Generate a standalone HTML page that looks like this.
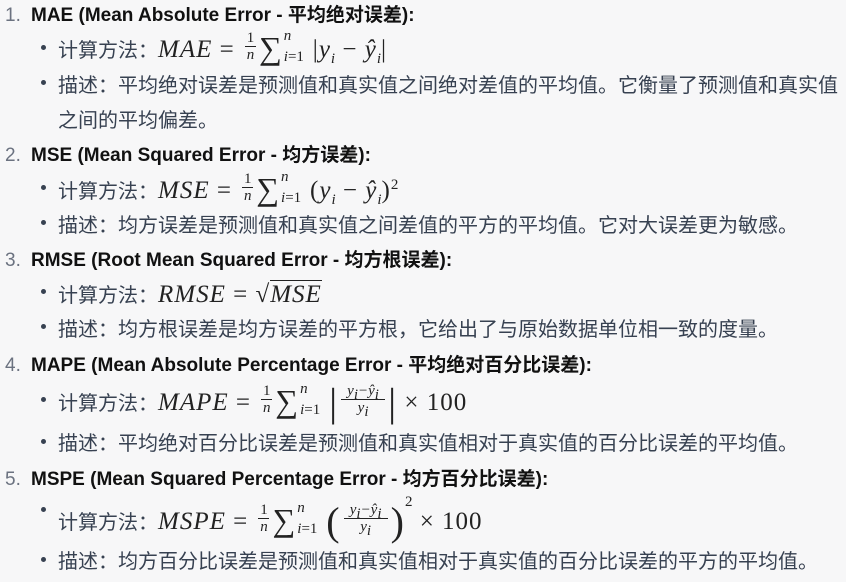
<!DOCTYPE html>
<html><head><meta charset="utf-8"><style>
body{margin:0;background:#f7f7f8;width:846px;height:582px;overflow:hidden;position:relative;font-family:"Liberation Sans","Noto Sans CJK SC",sans-serif;color:#374151;font-size:20px}
.l{position:absolute;white-space:nowrap;line-height:24px}
.h{font-weight:bold;color:#111;font-size:19px;left:31px}
.num{left:5px;color:#6b7280;font-size:19px}
.b{left:58px}
.dot{position:absolute;left:41px;width:5px;height:5px;border-radius:50%;background:#374151}
.m{font-family:"Liberation Serif",serif;font-size:25px;color:#222;letter-spacing:1px}
.i{font-style:italic}
.f{display:inline-block;position:relative;height:10px;margin:0 3px;letter-spacing:0}
.f>span{position:absolute;left:0;right:0;text-align:center;font-size:15px;line-height:14px;white-space:nowrap}
.f>.t{top:-16px;border-bottom:1px solid #222;padding-bottom:1px}
.f>.d{top:1px}
.s{font-size:15px;line-height:0;position:relative;letter-spacing:0}
.sg{font-size:32px;line-height:0;vertical-align:-2px}
.sum{display:inline-block;position:relative;width:30px}
.sum>span{position:absolute;left:1px;font-size:15px;line-height:14px;font-style:italic;letter-spacing:0;white-space:nowrap}
.sum>.up{top:-28px}
.sum>.dn{top:-7px}
.big{font-size:40px;font-weight:normal;vertical-align:-6px;line-height:0}
</style></head><body>
<div class="l num" style="top:4px">1.</div><div class="l h" style="top:4px">MAE (Mean Absolute Error - 平均绝对误差):</div>
<div class="dot" style="top:45px"></div><div class="l b" style="top:38px">计算方法：<span class="m"><span class="i">MAE</span> = <span class="f" style="width:11px"><span class="t">1</span><span class="d i">n</span></span><span class="sg">∑</span><span class="sum"><span class="up">n</span><span class="dn">i<span style="font-style:normal">=1</span></span></span>|<span class="i">y<sub class="s">i</sub></span> − <span class="i">ŷ<sub class="s">i</sub></span>|</span></div>
<div class="dot" style="top:80px"></div><div class="l b" style="top:74px">描述：平均绝对误差是预测值和真实值之间绝对差值的平均值。它衡量了预测值和真实值</div>
<div class="l b" style="top:109px">之间的平均偏差。</div>

<div class="l num" style="top:144px">2.</div><div class="l h" style="top:144px">MSE (Mean Squared Error - 均方误差):</div>
<div class="dot" style="top:185px"></div><div class="l b" style="top:179px">计算方法：<span class="m"><span class="i">MSE</span> = <span class="f" style="width:11px"><span class="t">1</span><span class="d i">n</span></span><span class="sg">∑</span><span class="sum"><span class="up">n</span><span class="dn">i<span style="font-style:normal">=1</span></span></span>(<span class="i">y<sub class="s">i</sub></span> − <span class="i">ŷ<sub class="s">i</sub></span>)<sup class="s">2</sup></span></div>
<div class="dot" style="top:220px"></div><div class="l b" style="top:214px">描述：均方误差是预测值和真实值之间差值的平方的平均值。它对大误差更为敏感。</div>

<div class="l num" style="top:249px">3.</div><div class="l h" style="top:249px">RMSE (Root Mean Squared Error - 均方根误差):</div>
<div class="dot" style="top:289px"></div><div class="l b" style="top:283px">计算方法：<span class="m"><span class="i">RMSE</span> = √<span class="i" style="border-top:1px solid #222">MSE</span></span></div>
<div class="dot" style="top:324px"></div><div class="l b" style="top:318px">描述：均方根误差是均方误差的平方根，它给出了与原始数据单位相一致的度量。</div>

<div class="l num" style="top:354px">4.</div><div class="l h" style="top:354px">MAPE (Mean Absolute Percentage Error - 平均绝对百分比误差):</div>
<div class="dot" style="top:397px"></div><div class="l b" style="top:391px">计算方法：<span class="m"><span class="i">MAPE</span> = <span class="f" style="width:11px"><span class="t">1</span><span class="d i">n</span></span><span class="sg">∑</span><span class="sum"><span class="up">n</span><span class="dn">i<span style="font-style:normal">=1</span></span></span><span class="big">|</span><span class="f" style="width:44px"><span class="t i">y<sub class="s">i</sub>−ŷ<sub class="s">i</sub></span><span class="d i">y<sub class="s">i</sub></span></span><span class="big">|</span> × 100</span></div>
<div class="dot" style="top:439px"></div><div class="l b" style="top:432px">描述：平均绝对百分比误差是预测值和真实值相对于真实值的百分比误差的平均值。</div>

<div class="l num" style="top:468px">5.</div><div class="l h" style="top:468px">MSPE (Mean Squared Percentage Error - 均方百分比误差):</div>
<div class="dot" style="top:507px"></div><div class="l b" style="top:510px">计算方法：<span class="m"><span class="i">MSPE</span> = <span class="f" style="width:11px"><span class="t">1</span><span class="d i">n</span></span><span class="sg">∑</span><span class="sum"><span class="up">n</span><span class="dn">i<span style="font-style:normal">=1</span></span></span><span class="big">(</span><span class="f" style="width:44px"><span class="t i">y<sub class="s">i</sub>−ŷ<sub class="s">i</sub></span><span class="d i">y<sub class="s">i</sub></span></span><span class="big">)</span><sup class="s" style="top:-14px">2</sup> × 100</span></div>
<div class="dot" style="top:557px"></div><div class="l b" style="top:550px">描述：均方百分比误差是预测值和真实值相对于真实值的百分比误差的平方的平均值。</div>
</body></html>
